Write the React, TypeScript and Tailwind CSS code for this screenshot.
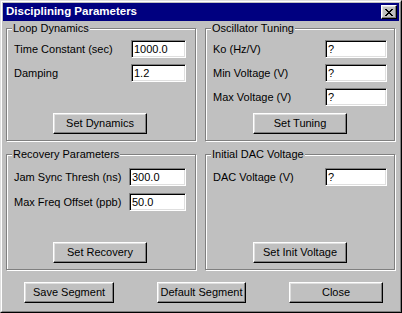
import type { ReactNode } from "react";

const font = { fontFamily: '"Liberation Sans", Arial, sans-serif' };

function Btn({ label, className = "" }: { label: string; className?: string }) {
  return (
    <div
      className={`flex h-[21px] items-center justify-center border border-t-white border-l-white border-r-black border-b-black bg-[#c0c0c0] text-[11px] text-black shadow-[inset_-1px_-1px_0_#808080,inset_1px_1px_0_#dfdfdf] ${className}`}
    >
      {label}
    </div>
  );
}

function Field({ label, value, labelW, inputW }: { label: string; value: string; labelW: string; inputW: string }) {
  return (
    <div className="flex h-[18px] items-center">
      <span className={`${labelW} text-[11px] text-black`}>{label}</span>
      <div
        className={`${inputW} flex h-[18px] items-center border border-t-[#808080] border-l-[#808080] border-r-white border-b-white bg-white pl-[2px] text-[11px] text-black shadow-[inset_1px_1px_0_#000,inset_-1px_-1px_0_#dfdfdf]`}
      >
        {value}
      </div>
    </div>
  );
}

function Group({ title, className = "", children }: { title: string; className?: string; children: ReactNode }) {
  return (
    <div
      className={`relative flex flex-col border border-[#808080] shadow-[inset_1px_1px_0_#fff,1px_1px_0_#fff] ${className}`}
    >
      <span className="absolute -top-[7px] left-[5px] bg-[#c0c0c0] px-px text-[11px] leading-[13px] text-black">
        {title}
      </span>
      {children}
    </div>
  );
}

export default function App() {
  return (
    <div className="h-[313px] w-[402px] border border-t-[#dfdfdf] border-l-[#dfdfdf] border-r-black border-b-black" style={font}>
      <div className="h-full w-full border border-t-white border-l-white border-r-[#808080] border-b-[#808080] bg-[#c0c0c0] p-px">
        {/* title bar */}
        <div className="flex h-[18px] items-center justify-between bg-[#000080] pl-[3px] pr-[2px]">
          <span className="text-[11.5px] font-bold text-white">Disciplining Parameters</span>
          <div className="flex h-[14px] w-[16px] items-center justify-center border border-t-white border-l-white border-r-black border-b-black bg-[#c0c0c0] shadow-[inset_-1px_-1px_0_#808080,inset_1px_1px_0_#dfdfdf]">
            <svg width="8" height="7" viewBox="0 0 8 7" shapeRendering="crispEdges">
              <path d="M0 0h2v1H0zM6 0h2v1H6zM1 1h2v1H1zM5 1h2v1H5zM2 2h4v1H2zM3 3h2v1H3zM2 4h4v1H2zM1 5h2v1H1zM5 5h2v1H5zM0 6h2v1H0zM6 6h2v1H6z" fill="#000" />
            </svg>
          </div>
        </div>

        {/* groups */}
        <div className="ml-[3px] mt-[7px] grid grid-cols-[190px_190px] gap-x-[9px] gap-y-[13px]">
          <Group title="Loop Dynamics" className="h-[113px]">
            <div className="mt-[11px] flex flex-col gap-[6px] pl-[7px]">
              <Field label="Time Constant (sec)" value="1000.0" labelW="w-[117px]" inputW="w-[55px]" />
              <Field label="Damping" value="1.2" labelW="w-[117px]" inputW="w-[55px]" />
            </div>
            <Btn label="Set Dynamics" className="mb-[6px] ml-[46px] mt-auto w-[94px]" />
          </Group>
          <Group title="Oscillator Tuning" className="h-[113px]">
            <div className="mt-[11px] flex flex-col gap-[6px] pl-[7px]">
              <Field label="Ko (Hz/V)" value="?" labelW="w-[112px]" inputW="w-[62px]" />
              <Field label="Min Voltage (V)" value="?" labelW="w-[112px]" inputW="w-[62px]" />
              <Field label="Max Voltage (V)" value="?" labelW="w-[112px]" inputW="w-[62px]" />
            </div>
            <Btn label="Set Tuning" className="mb-[6px] ml-[47px] mt-auto w-[94px]" />
          </Group>
          <Group title="Recovery Parameters" className="h-[116px]">
            <div className="mt-[13px] flex flex-col gap-[7px] pl-[7px]">
              <Field label="Jam Sync Thresh (ns)" value="300.0" labelW="w-[115px]" inputW="w-[57px]" />
              <Field label="Max Freq Offset (ppb)" value="50.0" labelW="w-[115px]" inputW="w-[57px]" />
            </div>
            <Btn label="Set Recovery" className="mb-[6px] ml-[46px] mt-auto w-[94px]" />
          </Group>
          <Group title="Initial DAC Voltage" className="h-[116px]">
            <div className="mt-[13px] flex flex-col pl-[7px]">
              <Field label="DAC Voltage (V)" value="?" labelW="w-[112px]" inputW="w-[62px]" />
            </div>
            <Btn label="Set Init Voltage" className="mb-[6px] ml-[47px] mt-auto w-[94px]" />
          </Group>
        </div>

        {/* bottom buttons */}
        <div className="mt-[12px] flex">
          <Btn label="Save Segment" className="ml-[21px] w-[90px]" />
          <Btn label="Default Segment" className="ml-[43px] w-[89px]" />
          <Btn label="Close" className="ml-[43px] w-[94px]" />
        </div>
      </div>
    </div>
  );
}
